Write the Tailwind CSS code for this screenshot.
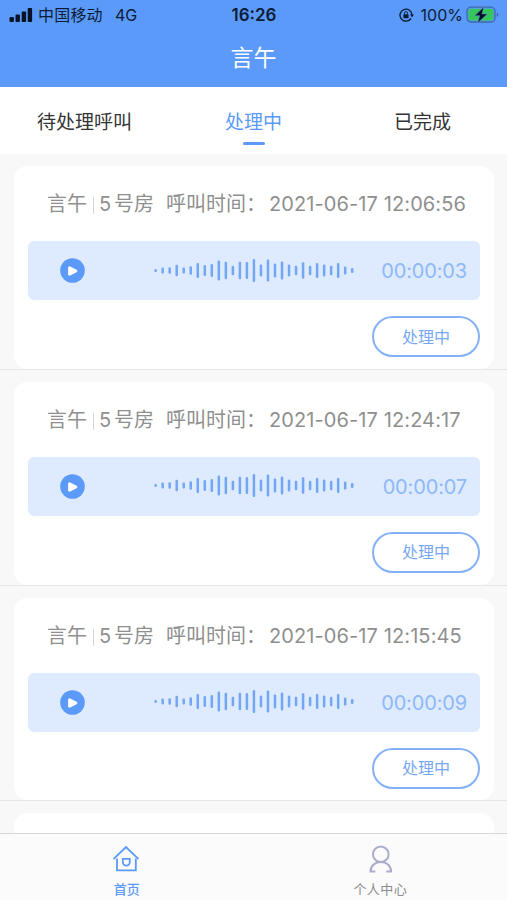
<!DOCTYPE html>
<html lang="zh">
<head>
  <meta charset="UTF-8" />
  <meta name="viewport" content="width=device-width, initial-scale=1.0"/>
  <title>言午</title>
  <script src="https://cdn.jsdelivr.net/npm/@tailwindcss/browser@4"></script>
</head>
<body class="bg-[#f8f8f8] font-['Inter','Noto_Sans_CJK_SC',sans-serif]">
  <div class="w-[507px] h-[900px] flex flex-col overflow-hidden">

    <!-- 頂部 -->
    <header class="h-[87px] shrink-0 bg-[#5b9af8]">
      <div class="h-[30px] grid grid-cols-3 items-center pl-[9px] pr-[8px] text-[#0c1c38] text-[16px] leading-[30px]">
        <div class="flex items-center">
          <svg class="w-[24px] h-[14px]" viewBox="0 0 24 14" fill="#071226">
            <rect x="0.5" y="9" width="4.4" height="5" rx="1"/>
            <rect x="6.5" y="6.5" width="4.4" height="7.5" rx="1"/>
            <rect x="12.7" y="3.5" width="4.4" height="10.5" rx="1"/>
            <rect x="18.7" y="0" width="4.4" height="14" rx="1"/>
          </svg>
          <span class="ml-[5px] w-[77px] tracking-[0.2px]">中国移动</span>
          <span>4G</span>
        </div>
        <div class="text-center font-semibold text-[17px]">16:26</div>
        <div class="flex items-center justify-end">
          <svg class="w-[15px] h-[14px] mr-[7px]" viewBox="0 0 15 14" fill="none" stroke="#0c1c38" stroke-width="1.4">
            <path d="M12 10.5A6 6 0 1 1 13 7"/>
            <path d="M11 6.5h4l-2 2.8z" fill="#0c1c38" stroke="none"/>
            <rect x="4.4" y="6.2" width="5.2" height="4" rx=".6" fill="#0c1c38" stroke="none"/>
            <path d="M5.4 6.5V5.3a1.6 1.6 0 0 1 3.2 0v1.2" stroke-width="1"/>
          </svg>
          <span>100%</span>
          <svg class="w-[33px] h-[18px] ml-[3px]" viewBox="0 0 33 18">
            <rect x="1" y="1.2" width="28" height="14.8" rx="4" fill="none" stroke="#3c68ac" stroke-width="1.3"/>
            <rect x="2.6" y="2.8" width="24.8" height="11.6" rx="2.3" fill="#35c759"/>
            <path d="M30.8 6.5v4.5q1.6-.6 1.6-2.2t-1.6-2.3z" fill="#3c68ac"/>
            <path d="M17.8 1L8.6 9.7h5L11.6 16.9l9.8-9h-5.4z" fill="#071226" stroke="#5b9af8" stroke-width=".5"/>
          </svg>
        </div>
      </div>
      <h1 class="text-center text-white text-[23px] leading-[56px]">言午</h1>
    </header>

    <!-- 分頁標籤 -->
    <nav class="h-[67px] shrink-0 bg-white grid grid-cols-3 text-center text-[19px] leading-[28px] text-[#333]">
      <div class="pt-[22px]">待处理呼叫</div>
      <div class="pt-[22px] text-[#5b9af8] flex flex-col items-center">
        处理中
        <span class="mt-[5px] w-[22px] h-[2.5px] rounded-full bg-[#5b9af8]"></span>
      </div>
      <div class="pt-[22px]">已完成</div>
    </nav>

    <!-- 呼叫列表 -->
    <main id="list" class="flex-1 min-h-0 overflow-hidden"></main>

    <!-- 底部導覽 -->
    <footer class="h-[67px] shrink-0 bg-[#fbfbfb] border-t-[1.5px] border-[#d6d6d6] grid grid-cols-2 text-[13px] leading-[20px]">
      <div class="flex flex-col items-center pt-[11px] text-[#5b9af8] font-medium">
        <svg class="w-[28px] h-[28px] -ml-[2px]" viewBox="0 0 28 28" fill="none" stroke="#5b9af8" stroke-width="1.8">
          <path d="M1.5 14.2L14 2l12.5 12.2"/>
          <path d="M5 13.6V25.3h18.8V13.6"/>
          <path d="M10.8 13.8h7v3.2a3.5 3.7 0 0 1-7 0z"/>
        </svg>
        <span class="mt-[6px]">首页</span>
      </div>
      <div class="flex flex-col items-center pt-[11px] text-[#8c8c8c]">
        <svg class="w-[28px] h-[28px]" viewBox="0 0 28 28" fill="none" stroke="#a9adcb" stroke-width="2">
          <circle cx="14.8" cy="9.3" r="7.8"/>
          <path d="M9.3 26.6H4.5c0-5.5 4.3-9.5 10.3-9.5s10.3 4 10.3 9.5h-4.8"/>
        </svg>
        <span class="mt-[6px] tracking-[0.4px]">个人中心</span>
      </div>
    </footer>
  </div>

  <script>
    const calls = [
      { time: '2021-06-17 12:06:56', length: '00:00:03' },
      { time: '2021-06-17 12:24:17', length: '00:00:07' },
      { time: '2021-06-17 12:15:45', length: '00:00:09' },
      { time: '', length: '' }
    ];

    // 聲波每一條的高度
    const wave = [3, 6, 6.5, 11.5, 6, 8.5, 15, 11, 13, 20, 17.5, 9.5, 17.5, 17, 23,
      12, 22, 14, 18, 12, 9.5, 16.5, 9.5, 15, 12, 9.5, 15, 8, 5];

    const bars = wave.map((h, i) =>
      `<rect x="${(i * 7.02 + 0.4).toFixed(2)}" y="${11.5 - h / 2}" width="2.5" height="${h}" rx="1.1"/>`
    ).join('');

    document.getElementById('list').innerHTML = calls.map(c => `
      <section class="h-[215.8px] pt-[12px] pl-[14px] pr-[13px] border-b border-[#e6e6e6]">
        <div class="h-full bg-white rounded-[14px] px-[14px]">
          ${c.time ? `
          <div class="h-[75px] pl-[19px] pt-px flex items-center whitespace-nowrap text-[20px] text-[#8f8f8f]">
            <span class="w-[46px]">言午</span>
            <span class="w-px h-[17px] mt-[3px] bg-[#d5d5d5]"></span>
            <span class="ml-[5px] w-[15px]">5</span>
            <span class="w-[52px]">号房</span>
            <span class="w-[103px]">呼叫时间：</span>
            <span class="tracking-[0.1px]">${c.time}</span>
          </div>
          <div class="h-[59px] rounded-[6px] bg-[#deeafd] flex items-center pl-[32px] pr-[13px] text-[20px]">
            <svg class="w-[25px] h-[25px]" viewBox="0 0 25 25">
              <circle cx="12.5" cy="12.5" r="12.3" fill="#5b9af8"/>
              <path d="M9.5 9.7v6.6l6.5-3.3z" fill="#fff" stroke="#fff" stroke-width="2.8" stroke-linejoin="round"/>
            </svg>
            <svg class="ml-[69px] w-[200px] h-[24px]" viewBox="0 0 200 24" fill="#73a7f4">${bars}</svg>
            <span class="ml-auto pt-px tracking-[-0.15px] text-[#8db9f8]">${c.length}</span>
          </div>
          <div class="mt-[16px] flex justify-end">
            <button class="w-[108px] h-[41px] rounded-full border-2 border-[#84b1f5] text-[16px] text-[#76a8f3]">处理中</button>
          </div>` : ''}
        </div>
      </section>`).join('');
  </script>
</body>
</html>
